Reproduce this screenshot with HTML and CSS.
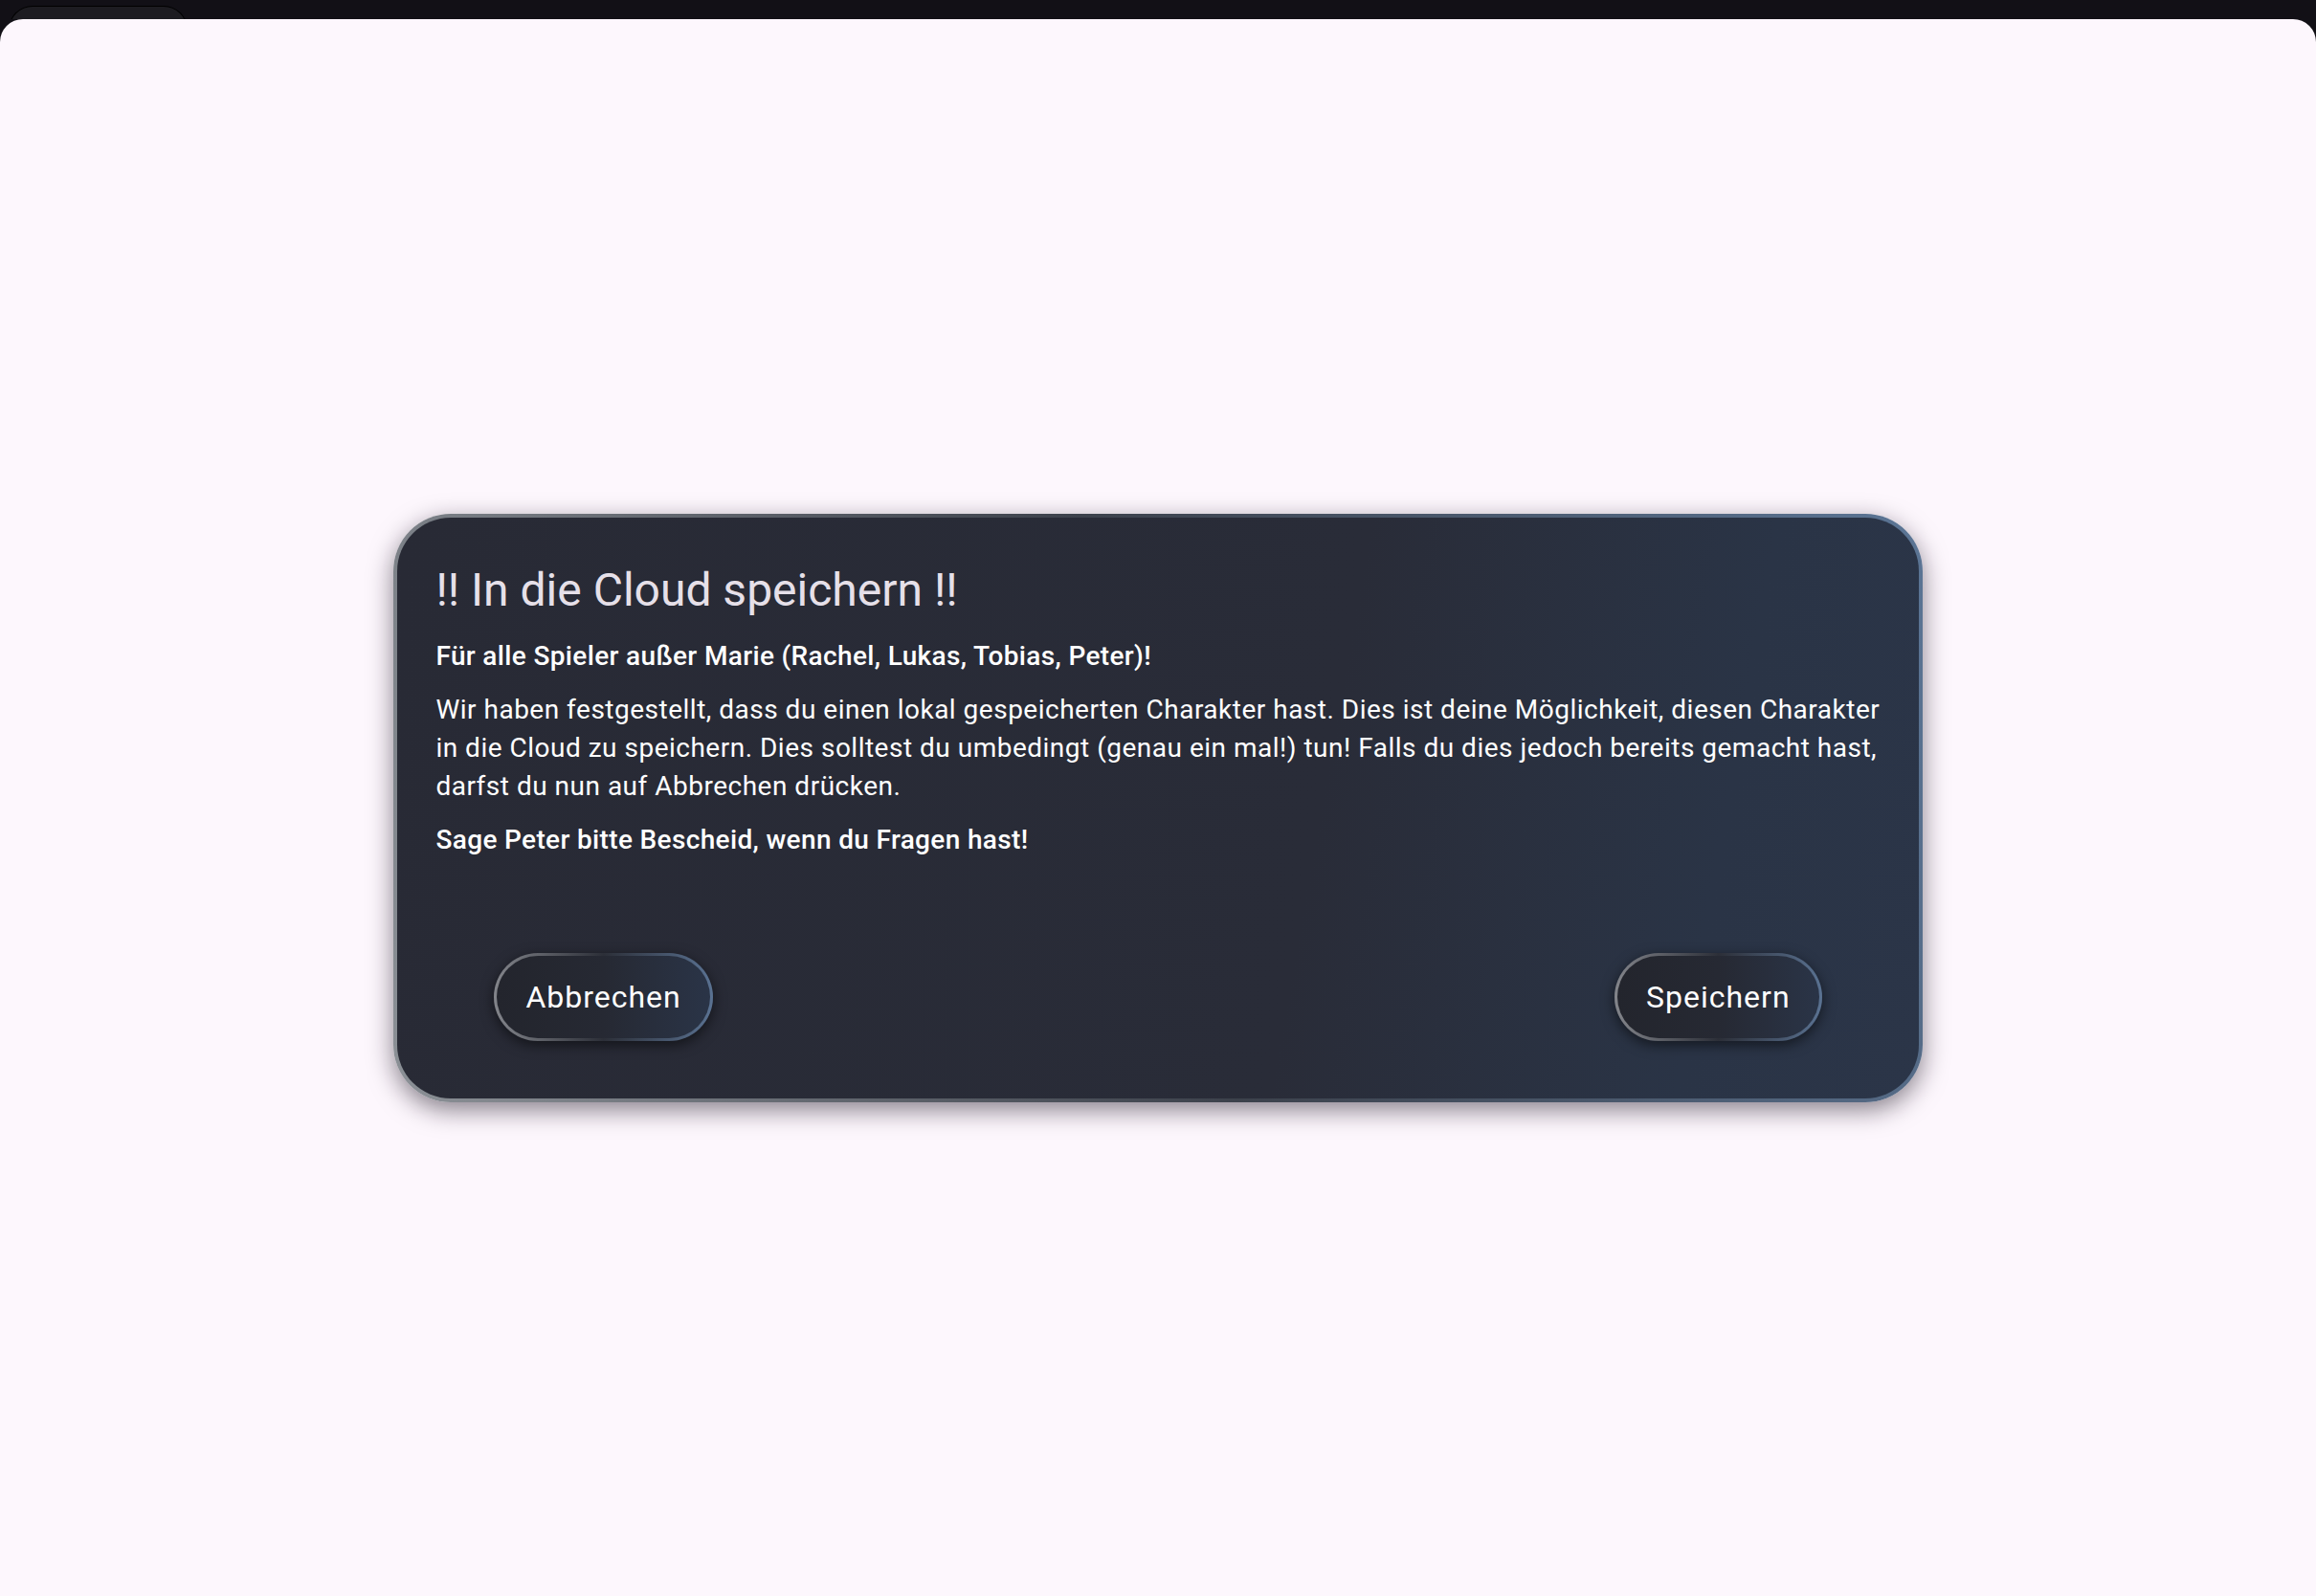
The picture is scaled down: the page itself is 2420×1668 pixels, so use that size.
FILE: index.html
```html
<!DOCTYPE html>
<html lang="de">
<head>
<meta charset="utf-8">
<title>In die Cloud speichern</title>
<link rel="stylesheet" href="styles.css">
</head>
<body>
<div class="topbar"><div class="tab"></div></div>
<main class="screen">
  <section class="dialog" role="dialog">
    <h1 class="dialog-title">!! In die Cloud speichern !!</h1>
    <p class="strong">Für alle Spieler außer Marie (Rachel, Lukas, Tobias, Peter)!</p>
    <p>Wir haben festgestellt, dass du einen lokal gespeicherten Charakter hast. Dies ist deine Möglichkeit, diesen Charakter in die Cloud zu speichern. Dies solltest du umbedingt (genau ein mal!) tun! Falls du dies jedoch bereits gemacht hast, darfst du nun auf Abbrechen drücken.</p>
    <p class="strong">Sage Peter bitte Bescheid, wenn du Fragen hast!</p>
    <div class="actions">
      <button class="btn" type="button">Abbrechen</button>
      <button class="btn" type="button">Speichern</button>
    </div>
  </section>
</main>
</body>
</html>
```
FILE: styles.css
```css
html, body {
  margin: 0;
  padding: 0;
  height: 100%;
}
body {
  background: #121016;
  display: flex;
  flex-direction: column;
  font-family: Roboto, "Noto Sans", sans-serif;
}
.topbar {
  height: 20px;
  flex: 0 0 20px;
  overflow: hidden;
  display: flex;
}
.tab {
  margin: 7px 0 0 10px;
  width: 185px;
  height: 60px;
  border-radius: 24px 24px 0 0;
  background: #1d1c21;
  box-shadow: 0 0 0 1px #000;
}
.screen {
  flex: 1;
  background: #fdf7fd;
  border-radius: 24px 24px 0 0;
  display: flex;
  align-items: center;
  justify-content: center;
}
.dialog {
  width: 66%;
  box-sizing: border-box;
  border: 4px solid transparent;
  border-radius: 60px;
  background:
    linear-gradient(100deg, #282a35 0%, #292c38 60%, #2a3446 85%, #2b3548 100%) padding-box,
    linear-gradient(75deg, #8b9096 0%, #3c414b 50%, #5b7595 100%) border-box;
  box-shadow: 0 8px 26px rgba(20, 10, 25, 0.5);
  padding: 47px 34px 44px 40px;
  color: #fff;
}
.dialog-title {
  margin: 0 0 21px;
  font-size: 48px;
  font-weight: 400;
  line-height: normal;
  color: #e6e0e9;
}
.dialog p {
  margin: 0 0 16px;
  font-size: 28px;
  line-height: 40px;
  letter-spacing: 0.5px;
}
.dialog p.strong {
  font-weight: 500;
  letter-spacing: 0.35px;
}
.actions {
  display: flex;
  justify-content: space-between;
  padding: 0 67px 0 61px;
  margin-top: 98px;
  margin-bottom: 16px;
}
.btn {
  font-family: Roboto, "Noto Sans", sans-serif;
  font-size: 32px;
  font-weight: 400;
  letter-spacing: 1px;
  line-height: normal;
  color: #fff;
  padding: 24px 30px;
  border: 3px solid transparent;
  border-radius: 999px;
  background:
    linear-gradient(90deg, #23252d 0%, #262933 50%, #2a3447 100%) padding-box,
    linear-gradient(90deg, #83858b 0%, #2c2f38 50%, #5a7292 100%) border-box;
  box-shadow: 0 4px 14px rgba(0, 0, 0, 0.55);
}
```
